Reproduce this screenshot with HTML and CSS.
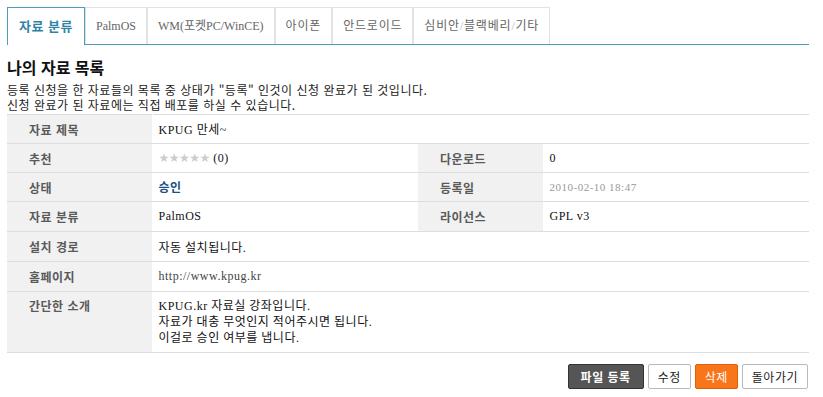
FILE: index.html
```html
<!DOCTYPE html>
<html lang="ko">
<head>
    <meta charset="UTF-8">
    <title>나의 자료 목록</title>
    <link rel="stylesheet" href="styles.css">
</head>
<body>
    <div class="page">
        <ul class="tabs">
            <li class="active">자료 분류</li>
            <li>PalmOS</li>
            <li>WM(포켓PC/WinCE)</li>
            <li class="ko">아이폰</li>
            <li class="ko">안드로이드</li>
            <li class="ko">심비안<span class="slash">/</span>블랙베리<span class="slash">/</span>기타</li>
        </ul>

        <h2 class="title">나의 자료 목록</h2>
        <p class="desc">등록 신청을 한 자료들의 목록 중 상태가 "등록" 인것이 신청 완료가 된 것입니다.<br>신청 완료가 된 자료에는 직접 배포를 하실 수 있습니다.</p>

        <table class="info">
            <colgroup>
                <col class="c-label">
                <col class="c-value">
                <col class="c-label2">
                <col>
            </colgroup>
            <tr>
                <th>자료 제목</th>
                <td colspan="3">KPUG 만세~</td>
            </tr>
            <tr>
                <th>추천</th>
                <td><span class="stars">★★★★★</span> (0)</td>
                <th>다운로드</th>
                <td>0</td>
            </tr>
            <tr>
                <th>상태</th>
                <td><strong class="ok">승인</strong></td>
                <th>등록일</th>
                <td><span class="date">2010-02-10 18:47</span></td>
            </tr>
            <tr class="wide">
                <th>자료 분류</th>
                <td>PalmOS</td>
                <th>라이선스</th>
                <td>GPL v3</td>
            </tr>
            <tr class="wide">
                <th>설치 경로</th>
                <td colspan="3">자동 설치됩니다.</td>
            </tr>
            <tr class="wide">
                <th>홈페이지</th>
                <td colspan="3" class="url">http://www.kpug.kr</td>
            </tr>
            <tr class="tall">
                <th>간단한 소개</th>
                <td colspan="3">KPUG.kr 자료실 강좌입니다.<br>자료가 대충 무엇인지 적어주시면 됩니다.<br>이걸로 승인 여부를 냅니다.</td>
            </tr>
        </table>

        <div class="actions">
            <button class="btn dark">파일 등록</button>
            <button class="btn">수정</button>
            <button class="btn orange">삭제</button>
            <button class="btn">돌아가기</button>
        </div>
    </div>
</body>
</html>
```

FILE: styles.css
```css
body {
    margin: 0;
    font-family: "Noto Sans CJK KR", "DejaVu Sans", sans-serif;
    font-size: 12px;
    letter-spacing: 0.5px;
    color: #222;
    background: #fff;
}
.page {
    width: 802px;
    padding: 7px;
}

/* 탭 */
.tabs {
    display: flex;
    align-items: flex-start;
    list-style: none;
    margin: 0;
    padding: 0;
    height: 37px;
    border-bottom: 1px solid #4a9fbf;
}
.tabs li {
    height: 36px;
    line-height: 36px;
    padding: 0 10px;
    border: 1px solid #e2e2e2;
    border-bottom: none;
    color: #666;
    font-family: "Liberation Serif", "Noto Sans CJK KR", serif;
    font-size: 12px;
    letter-spacing: 0;
}
.tabs li.ko {
    letter-spacing: 0.8px;
}
.tabs li.active {
    height: 37px;
    margin-bottom: -1px;
    padding: 0 11px;
    border-color: #4a9fbf;
    background: #fff;
    color: #2f84a6;
    font-family: "Noto Sans CJK KR", sans-serif;
    font-size: 13px;
    font-weight: bold;
    letter-spacing: 0.5px;
}
.tabs .slash {
    color: #bbb;
}

.title {
    margin: 12px 0 5px;
    font-size: 16px;
    line-height: 20px;
    font-weight: bold;
    letter-spacing: 0;
    color: #111;
}
.desc {
    margin: 0 0 2px;
    line-height: 15px;
    color: #222;
}

/* 자료 정보 */
.info {
    width: 100%;
    border-collapse: collapse;
    table-layout: fixed;
}
.c-label { width: 145px; }
.c-value { width: 266px; }
.c-label2 { width: 125px; }
.info th,
.info td {
    height: 28px;
    border-top: 1px solid #ddd;
    border-bottom: 1px solid #ddd;
    text-align: left;
    vertical-align: middle;
}
.info tr.wide th,
.info tr.wide td {
    height: 29px;
}
.info th {
    padding: 0 0 0 22px;
    background: #f1f1f1;
    color: #5a5a5a;
    font-weight: bold;
    border-right: 1px solid #fff;
}
.info td {
    padding: 0 6px;
    font-family: "Liberation Serif", "Noto Sans CJK KR", serif;
    color: #111;
}
.info tr.tall th,
.info tr.tall td {
    height: 48px;
    padding-top: 6px;
    padding-bottom: 6px;
    line-height: 16px;
    vertical-align: top;
}
.stars {
    color: #ccc;
    font-family: "DejaVu Sans", sans-serif;
    font-size: 12px;
    letter-spacing: -0.5px;
}
.ok {
    color: #1d4f80;
    font-family: "Noto Sans CJK KR", sans-serif;
}
.date {
    color: #999;
    font-size: 11px;
}
.url {
    color: #444 !important;
}

/* 버튼 */
.actions {
    display: flex;
    justify-content: flex-end;
    gap: 4px;
    margin-top: 11px;
    padding-right: 1px;
}
.btn {
    height: 25px;
    padding: 0 9px;
    border: 1px solid #bbb;
    border-radius: 2px;
    background: #fff;
    color: #222;
    font-family: "Noto Sans CJK KR", sans-serif;
    font-size: 12px;
    letter-spacing: 0.5px;
    cursor: pointer;
}
.btn.dark {
    padding: 0 12px;
    background: #555;
    border-color: #333;
    color: #fff;
    font-weight: bold;
}
.btn.orange {
    background: #f87519;
    border-color: #e05f00;
    color: #fff;
}
```
